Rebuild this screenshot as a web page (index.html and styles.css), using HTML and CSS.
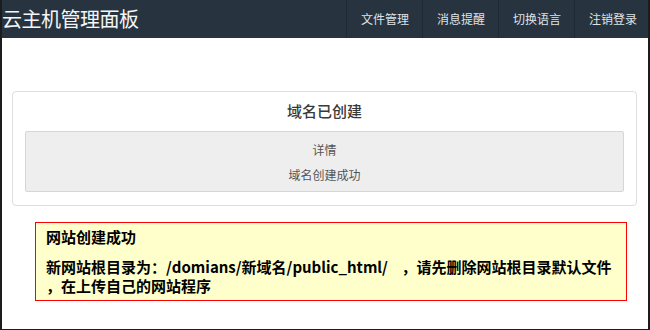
FILE: index.html
```html
<!DOCTYPE html>
<html lang="zh-CN">
<head>
    <meta charset="UTF-8">
    <title>云主机管理面板</title>
    <link rel="stylesheet" href="styles.css">
</head>
<body>
    <div class="frame">
        <header class="navbar">
            <span class="brand">云主机管理面板</span>
            <ul class="nav">
                <li>文件管理</li>
                <li>消息提醒</li>
                <li>切换语言</li>
                <li>注销登录</li>
            </ul>
        </header>

        <main class="content">
            <section class="panel">
                <h2 class="panel-title">域名已创建</h2>
                <div class="well">
                    <p>详情</p>
                    <p>域名创建成功</p>
                </div>
            </section>

            <div class="notice">
                <p class="notice-title">网站创建成功</p>
                <p class="notice-text">新网站根目录为：/domians/新域名/public_html/ &nbsp; &nbsp;，请先删除网站根目录默认文件<br>，在上传自己的网站程序</p>
            </div>
        </main>
    </div>
</body>
</html>
```

FILE: styles.css
```css
* {
    box-sizing: border-box;
}

html, body {
    margin: 0;
    padding: 0;
    background-color: #fff;
}

body {
    font-family: "Noto Sans CJK SC", "Liberation Sans", sans-serif;
    color: #333;
}

.frame {
    width: 650px;
    height: 330px;
    border: 2px solid #1c1c1c;
    border-top: none;
    border-bottom-width: 1px;
    overflow: hidden;
}

.navbar {
    height: 38px;
    margin: 0 -2px;
    background-color: #27343f;
    display: flex;
    align-items: center;
    justify-content: space-between;
}

.brand {
    color: #f4f6f8;
    font-size: 20px;
    line-height: 38px;
    padding-left: 2px;
    letter-spacing: -0.5px;
}

.nav {
    list-style: none;
    margin: 0;
    padding: 0;
    display: flex;
    height: 38px;
}

.nav li {
    color: #dfe3e7;
    font-size: 12px;
    line-height: 38px;
    padding: 0 13px 0 14px;
    border-left: 1px solid #1e2933;
}

.content {
    padding: 53px 11px 0 10px;
}

.panel {
    border: 1px solid #dedede;
    border-radius: 4px;
    padding: 8px 12px 13px;
}

.panel-title {
    margin: 0 0 9px;
    text-align: center;
    font-size: 15px;
    font-weight: 500;
    line-height: 22px;
    color: #3a3a3a;
}

.well {
    background-color: #eeeeee;
    border: 1px solid #d6d6d6;
    border-radius: 2px;
    padding: 5px 0 4px;
    text-align: center;
}

.well p {
    margin: 0;
    font-size: 12px;
    line-height: 25px;
    color: #555;
}

.notice {
    margin: 16px 10px 0 23px;
    background-color: #ffffcc;
    border: 1px solid #ff0000;
    padding: 4px 10px 5px;
    color: #000;
}

.notice-title {
    margin: 0;
    font-size: 15px;
    font-weight: bold;
    line-height: 19px;
}

.notice-text {
    margin: 11px 0 0;
    font-size: 15px;
    font-weight: bold;
    line-height: 19px;
}
```
